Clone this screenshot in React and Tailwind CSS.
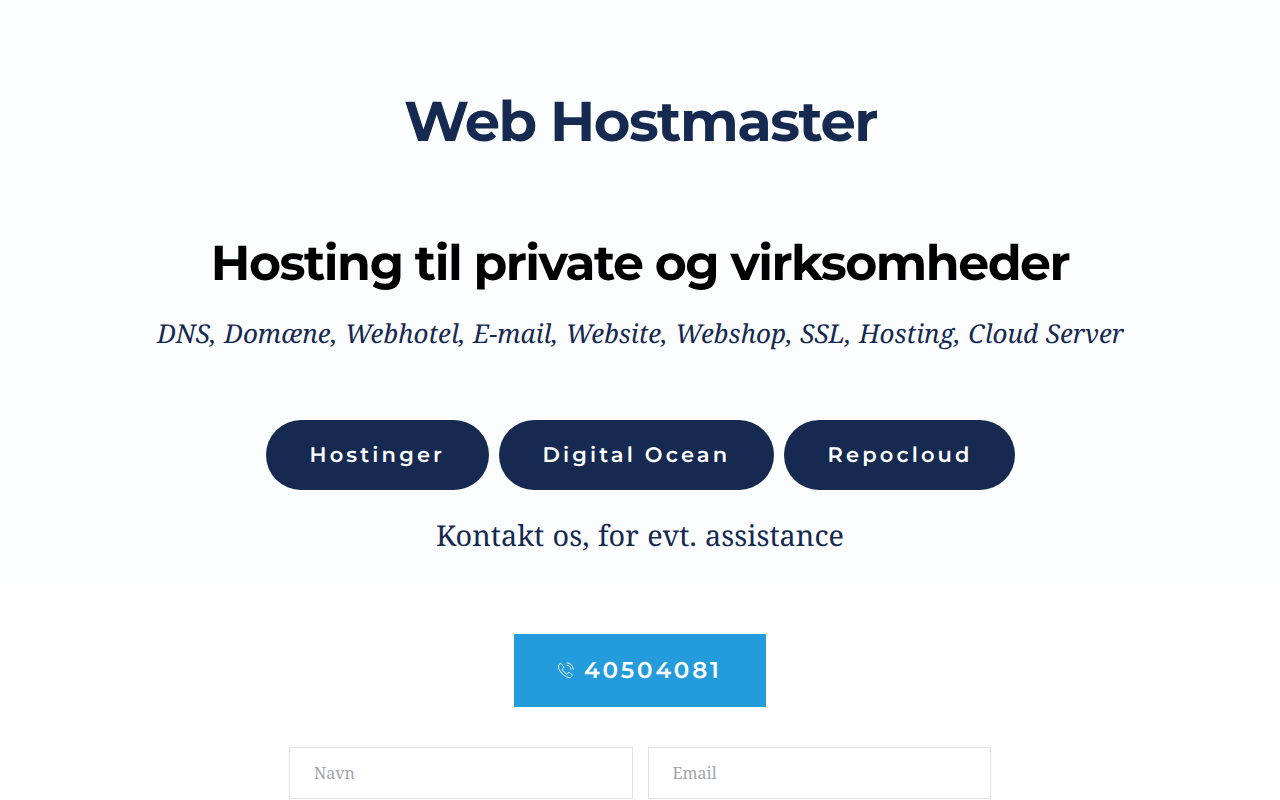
const links = [
  { name: 'Hostinger', width: 'w-[223px]' },
  { name: 'Digital Ocean', width: 'w-[275px]' },
  { name: 'Repocloud', width: 'w-[231px]' },
]

function PhoneIcon() {
  return (
    <svg viewBox="0 0 17 17" className="size-[17px] shrink-0" fill="none" stroke="currentColor" strokeWidth="0.9" strokeLinecap="round" strokeLinejoin="round">
      <path d="M3.200 1.700 1.900 2.800C.8 4 1.400 6.800 3.300 9.500 5.600 12.700 8.800 15 12 15.600c1.100.2 1.800-.2 2.500-1l.7-1c.3-.5.2-.9-.2-1.200l-2.400-1.700c-.5-.4-1-.3-1.400.2l-.7.9c-.3.400-.7.4-1.100.1-1.700-1.200-3-2.500-4-4.200-.3-.5-.2-.8.2-1.100l.8-.6c.5-.4.5-.8.2-1.300L4.500 2c-.3-.5-.8-.6-1.300-.3Z" />
      <path d="M10 .8c3.600.3 6 2.800 6.300 6.400M9.900 3.300c2.400.2 3.900 1.700 4.100 4" />
    </svg>
  )
}

function Field({ name, label }) {
  return (
    <input
      name={name}
      placeholder={label}
      aria-label={label}
      className="h-[52px] min-w-0 flex-1 border border-[#e2e3e5] bg-white px-6 text-base text-[#162950] outline-none placeholder:text-[#a0a4ac]"
    />
  )
}

export default function App() {
  return (
    <div className="h-[800px] overflow-hidden bg-white text-[#162950] font-['Noto_Serif','Liberation_Serif',serif] [text-rendering:geometricPrecision]">
      <section className="flex h-[584px] flex-col items-center bg-[#fcfdff] pt-[85px]">
        <h1 className="h-[74px] whitespace-nowrap pl-px text-[56px] font-bold leading-[74px] tracking-[-1.5px] font-['Montserrat','Open_Sans',sans-serif]">
          Web Hostmaster
        </h1>
        <h2 className="mt-[73px] h-[64px] whitespace-nowrap text-[49px] font-bold leading-[64px] tracking-[-1.5px] text-black font-['Montserrat','Open_Sans',sans-serif]">
          Hosting til private og virksomheder
        </h2>
        <p className="mt-[17px] h-[40px] whitespace-nowrap pl-px text-[26px] italic leading-[40px] [word-spacing:1px]">
          DNS, Domæne, Webhotel, E-mail, Website, Webshop, SSL, Hosting, Cloud Server
        </p>
        <div className="mt-[67px] flex gap-2.5">
          {links.map(link => (
            <a
              key={link.name}
              href="#"
              className={`flex h-[70px] items-center rounded-full bg-[#162950] pt-0.5 pl-11 text-[21px] font-semibold tracking-[3.15px] whitespace-nowrap text-white font-['Montserrat','Open_Sans',sans-serif] ${link.width}`}
            >
              {link.name}
            </a>
          ))}
        </div>
        <p className="mt-[25px] h-[42px] whitespace-nowrap text-[28.8px] leading-[42px] [word-spacing:1px]">
          Kontakt os, for evt. assistance
        </p>
      </section>

      <section className="flex flex-col items-center pt-[50px]">
        <a
          href="tel:40504081"
          className="flex h-[73px] w-[252px] items-center gap-2.5 bg-[#249cdc] pl-[43px] text-[23px] font-semibold tracking-[2.85px] text-white font-['Montserrat','Open_Sans',sans-serif]"
        >
          <PhoneIcon />
          40504081
        </a>
        <form className="mt-10 flex w-[702px] gap-[15px]">
          <Field name="name" label="Navn" />
          <Field name="email" label="Email" />
        </form>
      </section>
    </div>
  )
}
